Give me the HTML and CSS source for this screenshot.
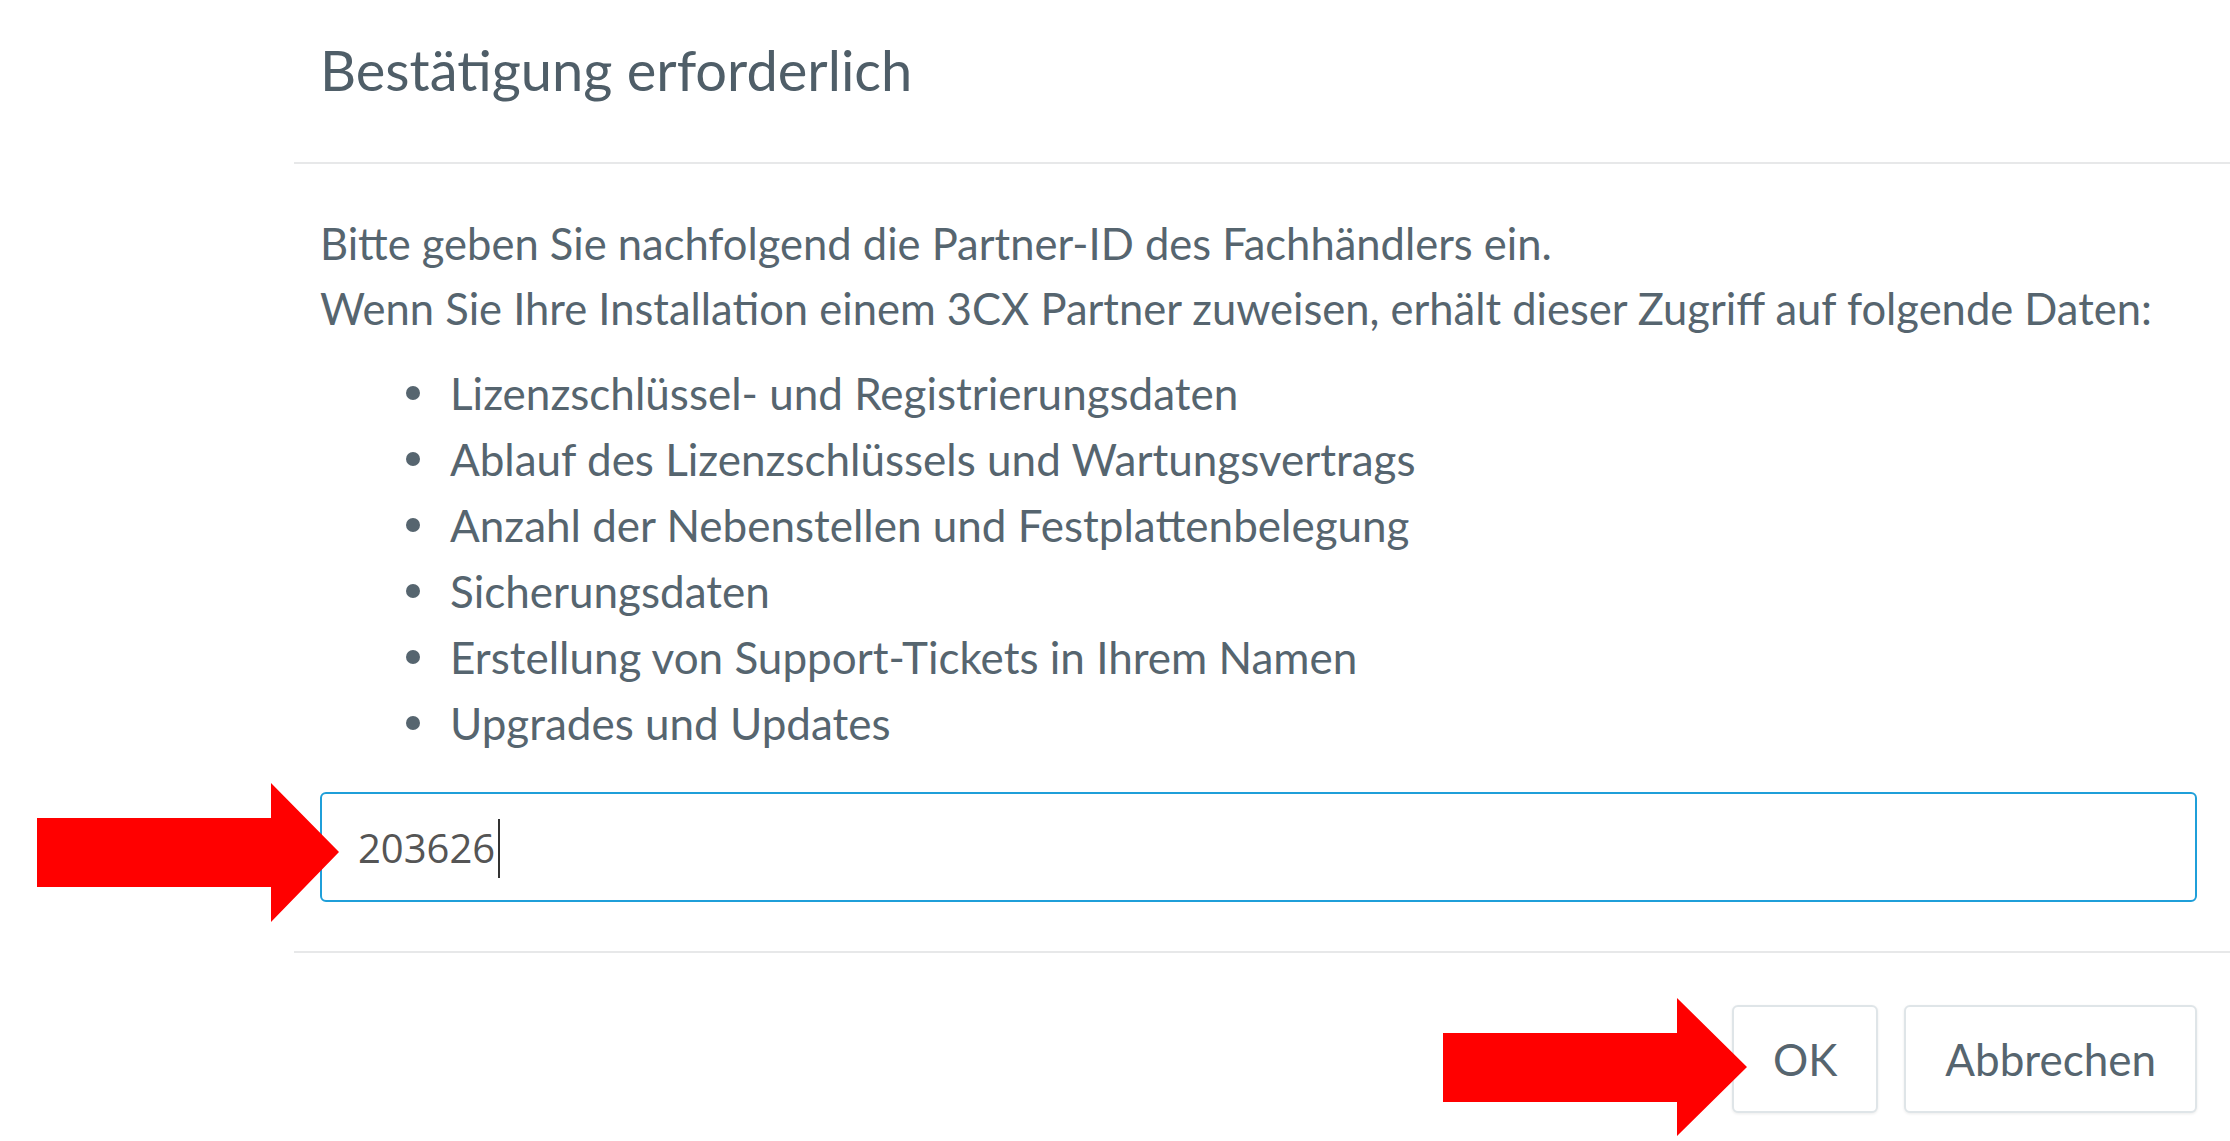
FILE: index.html
```html
<!DOCTYPE html>
<html lang="de">
<head>
    <meta charset="UTF-8">
    <meta name="viewport" content="width=device-width, initial-scale=1.0">
    <title>Bestätigung erforderlich</title>
    <link rel="stylesheet" href="styles.css">
</head>
<body>
    <div class="modal">
        <div class="modal-header">
            <h2>Bestätigung erforderlich</h2>
        </div>

        <div class="modal-body">
            <p>Bitte geben Sie nachfolgend die Partner-ID des Fachhändlers ein.<br>
            Wenn Sie Ihre Installation einem 3CX Partner zuweisen, erhält dieser Zugriff auf folgende Daten:</p>
            <ul class="data-list">
                <li>Lizenzschlüssel- und Registrierungsdaten</li>
                <li>Ablauf des Lizenzschlüssels und Wartungsvertrags</li>
                <li>Anzahl der Nebenstellen und Festplattenbelegung</li>
                <li>Sicherungsdaten</li>
                <li>Erstellung von Support-Tickets in Ihrem Namen</li>
                <li>Upgrades und Updates</li>
            </ul>
            <div class="partner-input" role="textbox" aria-label="Partner-ID">
                <span class="value">203626</span><span class="caret"></span>
            </div>
        </div>

        <div class="modal-footer">
            <button type="button" class="btn">OK</button>
            <button type="button" class="btn">Abbrechen</button>
        </div>
    </div>

    <!-- red arrows pointing at the field and the OK button -->
    <svg class="annotations" viewBox="0 0 2230 1141" aria-hidden="true">
        <polygon points="37,818 271,818 271,783 339,852 271,922 271,887 37,887" />
        <polygon points="1443,1033 1677,1033 1677,998 1747,1067 1677,1136 1677,1102 1443,1102" />
    </svg>
</body>
</html>
```

FILE: styles.css
```css
html,
body {
    margin: 0;
    padding: 0;
    background: #ffffff;
    overflow: hidden;
}

body {
    position: relative;
    width: 2230px;
    height: 1141px;
    font-family: Lato, "Open Sans", sans-serif;
    color: #56656f;
}

.modal {
    margin-left: 294px;
}

.modal-header {
    padding: 36px 33px 58px 26px;
    border-bottom: 2px solid #e7e8e9;
}

.modal-header h2 {
    margin: 0;
    font-size: 56px;
    font-weight: 400;
    line-height: 68px;
    color: #4f5e68;
}

.modal-body {
    padding: 47px 33px 49px 26px;
}

.modal-body p {
    margin: 0;
    font-size: 43.5px;
    line-height: 65px;
}

.data-list {
    list-style: none;
    margin: 19px 0 36px 0;
    padding-left: 86px;
    font-size: 44px;
    line-height: 66px;
}

.data-list li {
    display: flex;
    align-items: center;
}

.data-list li::before {
    content: "";
    flex: none;
    width: 14px;
    height: 14px;
    margin-right: 30px;
    border-radius: 50%;
    background: #56656f;
}

.partner-input {
    box-sizing: border-box;
    display: flex;
    align-items: center;
    height: 110px;
    padding: 2px 0 0 36px;
    border: 2px solid #1f9fd9;
    border-radius: 6px;
    font-family: "Open Sans", "Noto Sans", sans-serif;
    font-size: 40px;
    line-height: 60px;
    color: #555555;
}

.caret {
    width: 2px;
    height: 59px;
    margin-left: 3px;
    background: #333333;
}

.modal-footer {
    display: flex;
    justify-content: flex-end;
    gap: 26px;
    padding: 52px 33px 20px 26px;
    border-top: 2px solid #e7e8e9;
}

.btn {
    height: 108px;
    padding: 0 39px;
    border: 2px solid #dfe5e8;
    border-radius: 6px;
    background: #ffffff;
    box-shadow: 0 1px 3px rgba(0, 0, 0, 0.08);
    font-family: Lato, "Open Sans", sans-serif;
    font-size: 44px;
    color: #56656f;
    cursor: pointer;
}

.annotations {
    position: absolute;
    top: 0;
    left: 0;
    width: 2230px;
    height: 1141px;
    pointer-events: none;
}

.annotations polygon {
    fill: #ff0000;
}
```
